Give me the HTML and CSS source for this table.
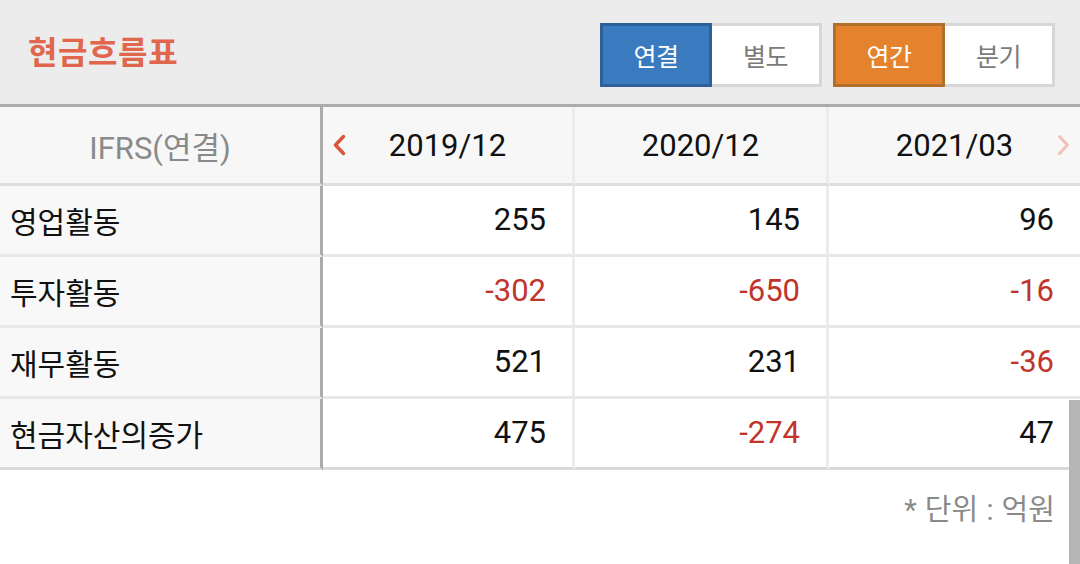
FILE: index.html
```html
<!DOCTYPE html>
<html lang="ko">
<head>
<meta charset="utf-8">
<title>현금흐름표</title>
<link rel="stylesheet" href="styles.css">
</head>
<body>
<div class="page">
  <header class="header">
    <h1 class="title">현금흐름표</h1>
    <div class="controls">
      <div class="seg">
        <button class="btn btn-blue">연결</button>
        <button class="btn">별도</button>
      </div>
      <div class="seg">
        <button class="btn btn-orange">연간</button>
        <button class="btn">분기</button>
      </div>
    </div>
  </header>

  <div class="table">
    <div class="cell head label-head">IFRS(연결)</div>
    <div class="cell head date">
      <svg class="arrow arrow-left" width="14" height="22" viewBox="0 0 14 22"><path d="M11.5 2.5 L3.5 11 L11.5 19.5" fill="none" stroke="#d9553c" stroke-width="3.5" stroke-linecap="round" stroke-linejoin="round"/></svg>
      2019/12
    </div>
    <div class="cell head date">2020/12</div>
    <div class="cell head date last">
      2021/03
      <svg class="arrow arrow-right" width="14" height="22" viewBox="0 0 14 22"><path d="M2.5 2.5 L10.5 11 L2.5 19.5" fill="none" stroke="#f2c1b6" stroke-width="3" stroke-linecap="round" stroke-linejoin="round"/></svg>
    </div>

    <div class="cell label">영업활동</div>
    <div class="cell num">255</div>
    <div class="cell num">145</div>
    <div class="cell num last">96</div>

    <div class="cell label">투자활동</div>
    <div class="cell num neg">-302</div>
    <div class="cell num neg">-650</div>
    <div class="cell num neg last">-16</div>

    <div class="cell label">재무활동</div>
    <div class="cell num">521</div>
    <div class="cell num">231</div>
    <div class="cell num neg last">-36</div>

    <div class="cell label end">현금자산의증가</div>
    <div class="cell num end">475</div>
    <div class="cell num neg end">-274</div>
    <div class="cell num last end">47</div>
  </div>

  <p class="unit">* 단위 : 억원</p>

  <div class="scrollbar"></div>
</div>
</body>
</html>
```

FILE: styles.css
```css
* {
  box-sizing: border-box;
}

html, body {
  margin: 0;
  padding: 0;
  background: #ffffff;
}

body {
  font-family: Roboto, "Noto Sans CJK KR", sans-serif;
  color: #111111;
}

.page {
  position: relative;
  width: 1080px;
  height: 564px;
  overflow: hidden;
}

.header {
  height: 107px;
  background: #ececec;
  border-bottom: 3px solid #ababab;
  display: flex;
  align-items: center;
  justify-content: space-between;
  padding: 6px 25px 0 28px;
}

.title {
  margin: 0 0 4px 0;
  font-size: 32px;
  font-weight: 700;
  letter-spacing: 0.6px;
  color: #e0674e;
  line-height: 1;
}

.controls {
  display: flex;
  gap: 11px;
}

.seg {
  display: flex;
}

.btn {
  width: 111px;
  height: 64px;
  border: 3px solid #d7d7d7;
  background: #ffffff;
  color: #7a7a7a;
  font-family: Roboto, "Noto Sans CJK KR", sans-serif;
  font-size: 25px;
  letter-spacing: -0.5px;
  padding: 0;
  margin: 0;
  display: flex;
  align-items: center;
  justify-content: center;
}

.seg .btn + .btn {
  border-left: none;
  width: 110px;
}

.btn-blue {
  width: 112px;
  background: #3a7bbf;
  border-color: #2d6098;
  color: #ffffff;
}

.btn-orange {
  width: 112px;
  background: #e5822d;
  border-color: #b0702c;
  color: #ffffff;
}

.table {
  display: grid;
  grid-template-columns: 323px 252px 254px 1fr;
  grid-auto-rows: 71px;
  grid-template-rows: 79px;
}

.cell {
  border-bottom: 3px solid #e8e8e8;
  border-right: 3px solid #ececec;
  background: #ffffff;
  display: flex;
  align-items: center;
  position: relative;
}

.cell.last {
  border-right: none;
}

.head {
  background: #f7f7f7;
  border-bottom-color: #dedede;
  justify-content: center;
  font-size: 31px;
}

.label-head {
  color: #8a8a8a;
  font-size: 31px;
  border-right: 3px solid #ababab;
}

.label {
  background: #f8f8f8;
  border-right: 3px solid #ababab;
  padding-left: 10px;
  font-size: 30px;
  letter-spacing: 0;
  color: #111111;
}

.num {
  justify-content: flex-end;
  padding-right: 26px;
  font-size: 31px;
  padding-bottom: 2px;
}

.neg {
  color: #c0352b;
}

.cell.end {
  border-bottom-color: #d9d9d9;
}

.arrow {
  position: absolute;
  top: 27px;
}

.arrow-left {
  left: 9px;
}

.arrow-right {
  right: 9px;
}

.unit {
  margin: 16px 25px 0 0;
  text-align: right;
  font-size: 29px;
  color: #8a8a8a;
  word-spacing: 1px;
}

.scrollbar {
  position: absolute;
  right: 0;
  top: 400px;
  width: 11px;
  height: 164px;
  background: #b5b5b5;
}
```
